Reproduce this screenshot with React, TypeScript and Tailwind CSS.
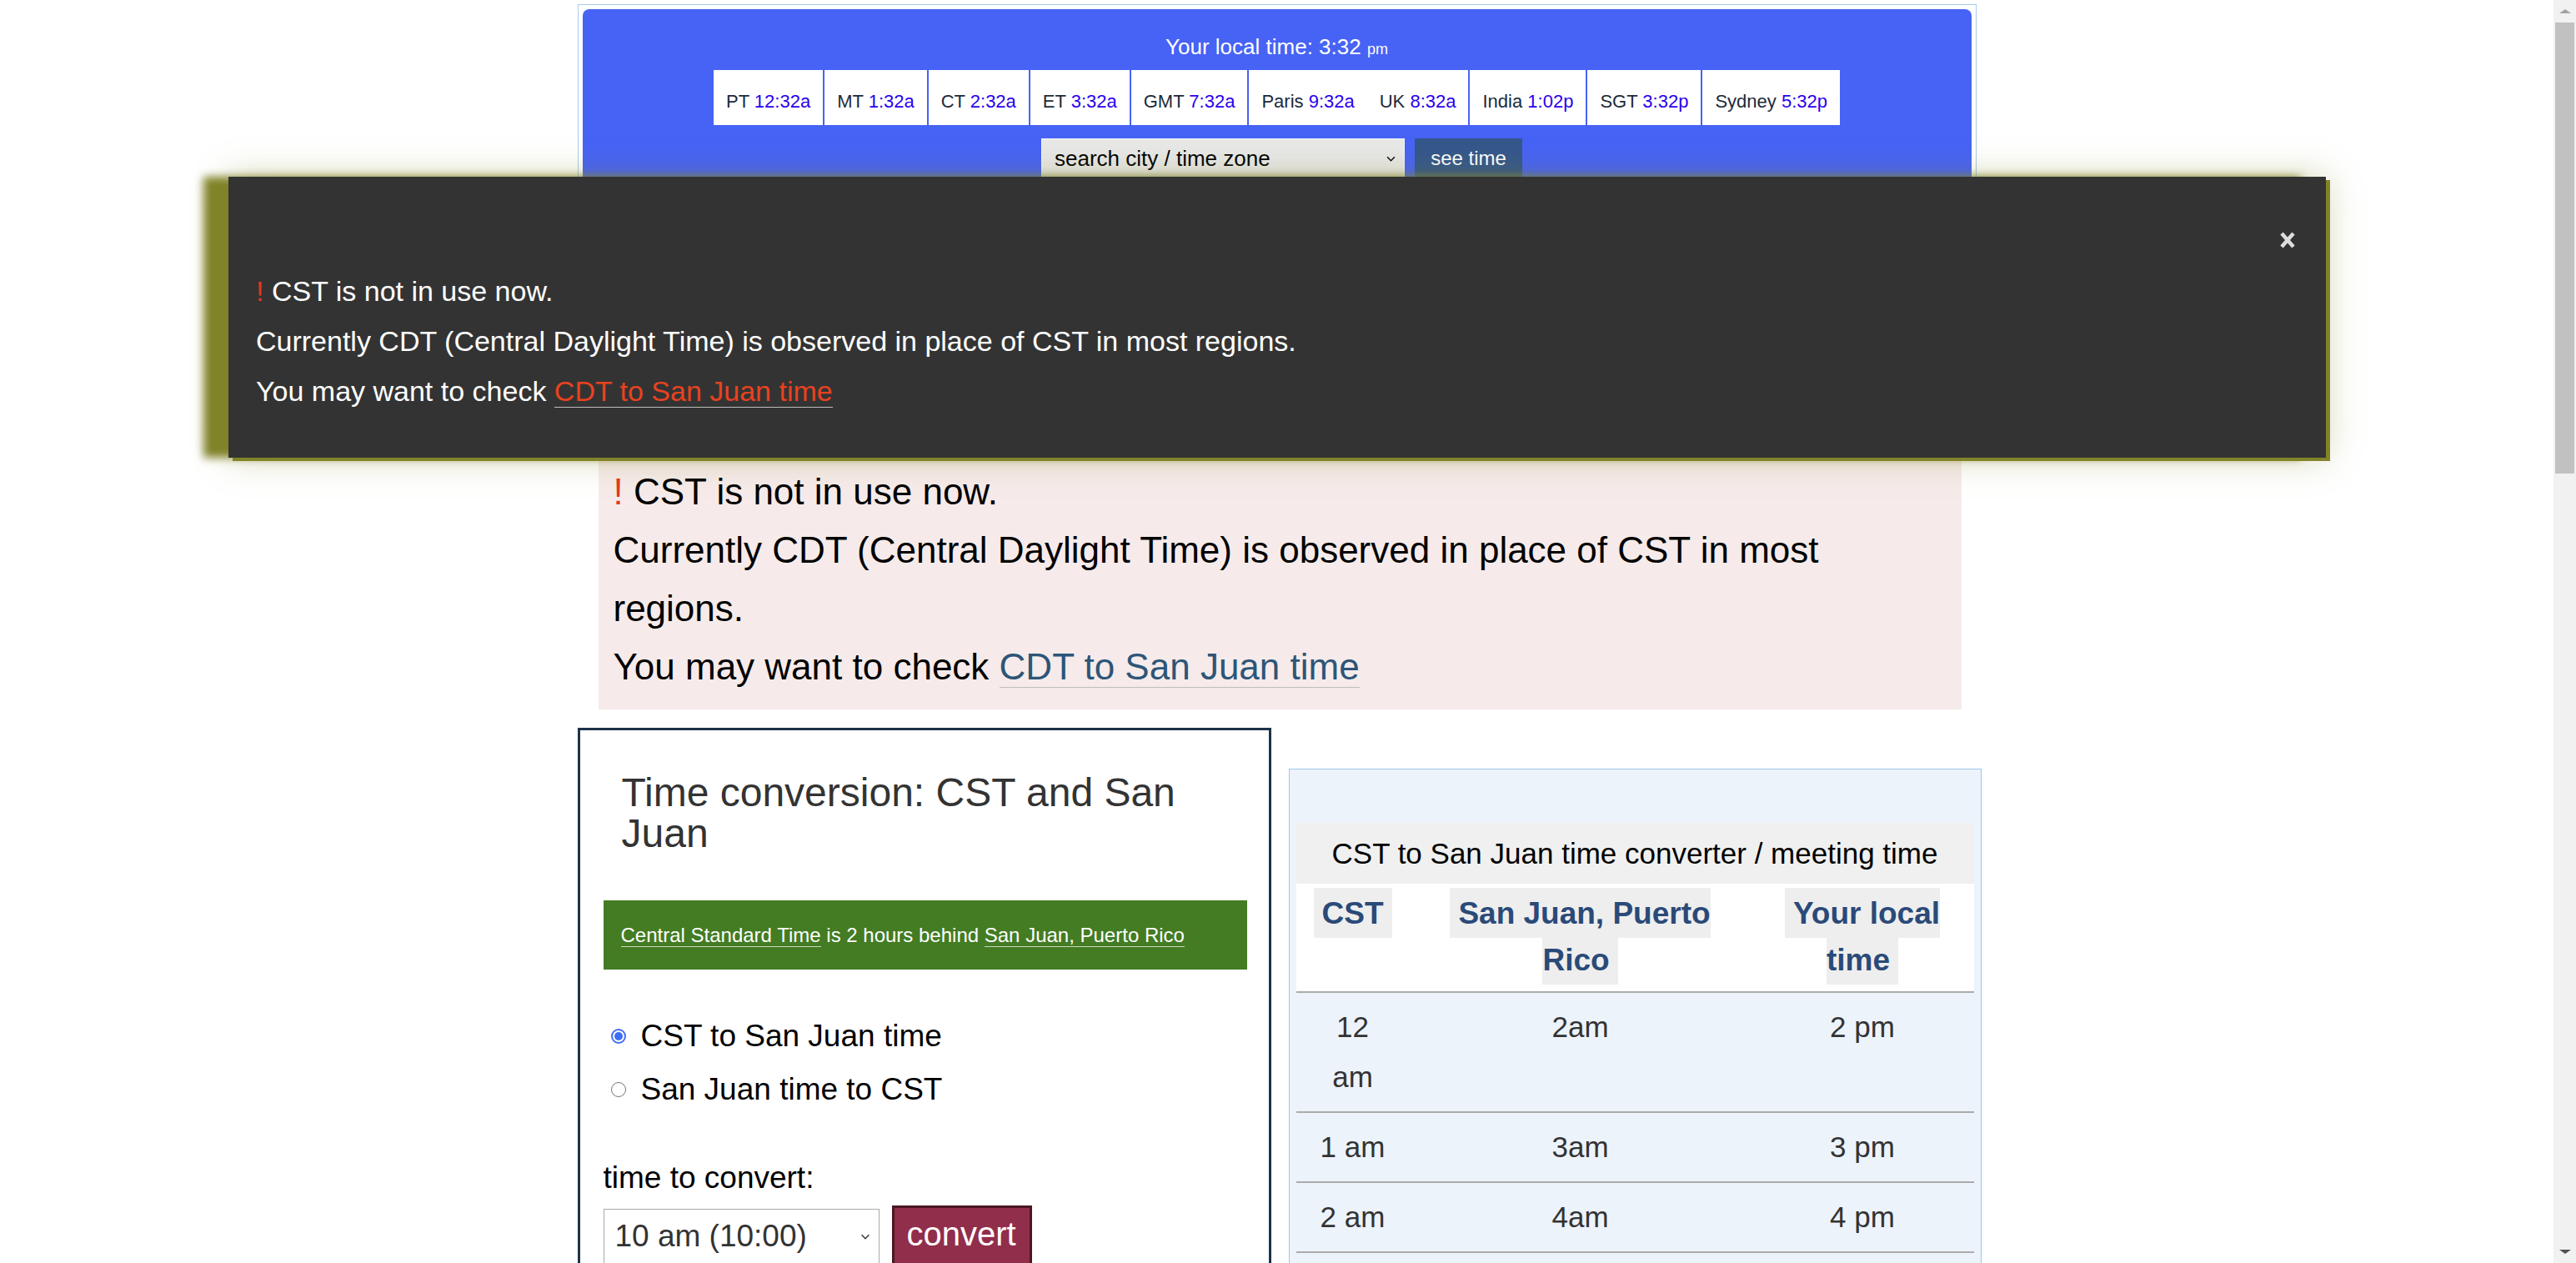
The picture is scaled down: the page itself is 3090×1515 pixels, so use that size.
import React from "react";

function Chevron({ className }: { className: string }) {
  return (
    <svg viewBox="0 0 12 8" className={className} fill="none" stroke="currentColor" strokeWidth={1.6}>
      <polyline points="1,1.5 6,6.5 11,1.5" />
    </svg>
  );
}

const zones: { label: string; time: string; joined?: boolean }[] = [
  { label: "PT", time: "12:32a" },
  { label: "MT", time: "1:32a" },
  { label: "CT", time: "2:32a" },
  { label: "ET", time: "3:32a" },
  { label: "GMT", time: "7:32a" },
  { label: "Paris", time: "9:32a" },
  { label: "UK", time: "8:32a", joined: true },
  { label: "India", time: "1:02p" },
  { label: "SGT", time: "3:32p" },
  { label: "Sydney", time: "5:32p" },
];

function Header() {
  return (
    <div className="border border-[#a9cbea] p-[5px]">
      <div className="flex flex-col items-center rounded-[8px] bg-[#4763f5] pb-[17px] pt-[30px]">
        <div className="text-[26px] leading-[30px] text-white">
          Your local time: 3:32 <span className="text-[18px]">pm</span>
        </div>
        <div className="mt-[10px] flex">
          {zones.map((z, i) => (
            <div
              key={z.label}
              className={
                i === 0 || z.joined
                  ? "h-[66px] bg-white px-[15px] pt-[25px] text-[22px] leading-[25px] text-[#1c2a39]"
                  : "ml-[2px] h-[66px] bg-white px-[15px] pt-[25px] text-[22px] leading-[25px] text-[#1c2a39]"
              }
            >
              {z.label} <span className="text-[#2a00ee]">{z.time}</span>
            </div>
          ))}
        </div>
        <div className="ml-[12px] mt-[16px] flex gap-[12px]">
          <div className="flex h-[48px] w-[436px] items-center justify-between border border-[#f6f6f6] bg-[#e8e8e8] pl-[15px] pr-[10px] text-[26px] text-black">
            <span>search city / time zone</span>
            <Chevron className="h-[7px] w-[11px] text-black" />
          </div>
          <div className="flex h-[48px] w-[129px] items-center justify-center bg-[#34578c] text-[24px] text-white">
            see time
          </div>
        </div>
      </div>
    </div>
  );
}

function Notice() {
  return (
    <div className="ml-[25px] mr-[18px] mt-[302px] bg-[#f6ebea] px-[18px] py-[16px] text-[44px] leading-[70px] text-black">
      <div>
        <span className="text-[#e2391e]">!</span> CST is not in use now.
      </div>
      <div>Currently CDT (Central Daylight Time) is observed in place of CST in most regions.</div>
      <div>
        You may want to check{" "}
        <a className="border-b border-[#bdbdbd] text-[#2d5578]">CDT to San Juan time</a>
      </div>
    </div>
  );
}

function Radio({ checked, label }: { checked: boolean; label: string }) {
  return (
    <div className="flex h-[64px] items-center gap-[18px]">
      {checked ? (
        <span className="flex h-[18px] w-[18px] items-center justify-center rounded-full border-[2px] border-[#3f6df6] bg-white">
          <span className="h-[10px] w-[10px] rounded-full bg-[#3f6df6]" />
        </span>
      ) : (
        <span className="h-[18px] w-[18px] rounded-full border border-[#767676] bg-white" />
      )}
      <span className="text-[37px] leading-[42px] text-black">{label}</span>
    </div>
  );
}

function LeftCard() {
  return (
    <div className="w-[832px] shrink-0 border-[3px] border-[#1c3349] bg-white pb-[40px]">
      <h2 className="pl-[50px] pr-[50px] pt-[50px] text-[48px] leading-[49px] text-[#333333]">
        Time conversion: CST and San Juan
      </h2>
      <div className="ml-[28px] mr-[26px] mt-[56px] bg-[#437c23] px-[21px] py-[27.5px] text-[24px] leading-[28px] text-white">
        <span className="border-b border-[#c8d8bf]">Central Standard Time</span> is 2 hours behind{" "}
        <span className="border-b border-[#c8d8bf]">San Juan, Puerto Rico</span>
      </div>
      <div className="ml-[37px] mt-[48px]">
        <Radio checked label="CST to San Juan time" />
        <Radio checked={false} label="San Juan time to CST" />
      </div>
      <div className="ml-[28px] mt-[53px] text-[37px] leading-[42px] text-black">time to convert:</div>
      <div className="ml-[28px] mt-[16px] flex items-start gap-[15px]">
        <div className="flex h-[66px] w-[331px] items-center justify-between border border-[#a9a9a9] bg-white pl-[13px] pr-[10px] text-[37px] leading-[42px] text-[#333333]">
          <span>10 am (10:00)</span>
          <Chevron className="h-[7px] w-[12px] text-[#333333]" />
        </div>
        <div className="-mt-[4px] h-[80px] w-[168px] border-[3px] border-[#4b1822] bg-[#912e4b] pl-[15px] pt-[8px] text-[40px] leading-[46px] text-white">
          convert
        </div>
      </div>
    </div>
  );
}

const rows = [
  ["12 am", "2am", "2 pm"],
  ["1 am", "3am", "3 pm"],
  ["2 am", "4am", "4 pm"],
];

function RightCard() {
  return (
    <div className="mt-[49px] w-[831px] shrink-0 border border-[#98c8ec] bg-[#edf3fb] px-[8px] pb-[40px] pt-[64px]">
      <div className="bg-[#f0f0f0] text-center text-[35px] leading-[73px] text-black">
        CST to San Juan time converter / meeting time
      </div>
      <table className="w-full table-fixed border-collapse">
        <colgroup>
          <col className="w-[136px]" />
          <col className="w-[410px]" />
          <col />
        </colgroup>
        <thead>
          <tr className="border-b-2 border-[#ababab] bg-white">
            {["CST", "San Juan, Puerto Rico", "Your local time"].map((h) => (
              <th
                key={h}
                className="px-[21px] pb-[10px] pt-[7px] text-center align-top text-[37px] font-bold leading-[56px] text-[#2a4a78]"
              >
                <span className="bg-[#eeeeee] px-[10px] py-[9.5px]">{h}</span>
              </th>
            ))}
          </tr>
        </thead>
        <tbody>
          {rows.map((r) => (
            <tr key={r[0]} className="border-b-2 border-[#ababab]">
              {r.map((c, i) => (
                <td
                  key={i}
                  className="px-[21px] py-[11px] text-center align-top text-[35px] leading-[60px] text-[#333333]"
                >
                  {c}
                </td>
              ))}
            </tr>
          ))}
        </tbody>
      </table>
    </div>
  );
}

function Overlay() {
  return (
    <div className="absolute left-[274px] top-[212px] h-[337px] w-[2516px] bg-[#333333] px-[33px] pt-[107px] text-[34px] leading-[60px] text-white shadow-[5px_4px_0_#818329,-30px_0_10px_#818329,0_0_40px_rgba(129,131,41,0.35)]">
      <svg viewBox="0 0 20 22" className="absolute right-[36px] top-[65px] h-[22px] w-[20px]">
        <path d="M3 3 L17 19 M17 3 L3 19" stroke="#dedede" strokeWidth="4.5" />
      </svg>
      <div>
        <span className="text-[#e2391e]">!</span> CST is not in use now.
      </div>
      <div>Currently CDT (Central Daylight Time) is observed in place of CST in most regions.</div>
      <div>
        You may want to check{" "}
        <a className="border-b border-[#bdbdbd] text-[#e8421f]">CDT to San Juan time</a>
      </div>
    </div>
  );
}

function Scrollbar() {
  return (
    <div className="flex h-full w-[27px] shrink-0 flex-col bg-[#f1f1f1]">
      <div className="flex h-[27px] items-center justify-center">
        <svg viewBox="0 0 14 5" className="h-[5px] w-[14px]">
          <polygon points="0,5 7,0 14,5" fill="#a3a3a3" />
        </svg>
      </div>
      <div className="mx-[2px] h-[541px] bg-[#c1c1c1]" />
      <div className="flex-1" />
      <div className="flex h-[27px] items-center justify-center">
        <svg viewBox="0 0 14 5" className="h-[5px] w-[14px]">
          <polygon points="0,0 14,0 7,5" fill="#505050" />
        </svg>
      </div>
    </div>
  );
}

export default function App() {
  return (
    <div className="flex h-[1515px] w-full overflow-hidden bg-white font-['Liberation_Sans',Arial,sans-serif]">
      <div className="relative min-w-0 flex-1 overflow-hidden">
        <div className="mx-auto w-[1678px] pt-[5px]">
          <Header />
          <Notice />
          <div className="mt-[22px] flex w-[1684px] items-start gap-[21px]">
            <LeftCard />
            <RightCard />
          </div>
        </div>
        <Overlay />
      </div>
      <Scrollbar />
    </div>
  );
}
